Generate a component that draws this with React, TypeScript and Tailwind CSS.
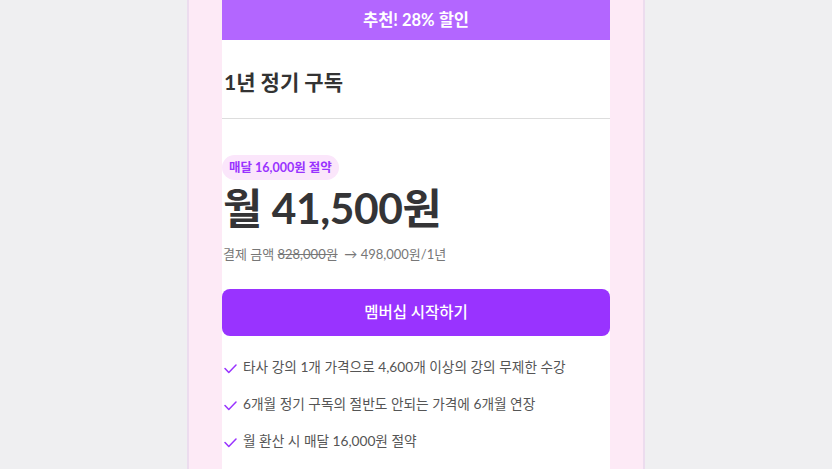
import React from "react";

const font = { fontFamily: "Lato, 'Noto Sans CJK KR', sans-serif" };

function Check() {
  return (
    <svg width="13" height="10" viewBox="0 0 13 10" className="shrink-0 mt-[8px]">
      <path d="M1 4.5 L4.8 8.5 L12 1" fill="none" stroke="#9933ff" strokeWidth="1.5" strokeLinecap="round" strokeLinejoin="round" />
    </svg>
  );
}

export default function App() {
  const items = [
    "타사 강의 1개 가격으로 4,600개 이상의 강의 무제한 수강",
    "6개월 정기 구독의 절반도 안되는 가격에 6개월 연장",
    "월 환산 시 매달 16,000원 절약",
  ];
  return (
    <div className="w-[832px] h-[469px] overflow-hidden bg-[#efeff1] flex justify-center" style={font}>
      <div className="w-[458px] h-full bg-[#fdeaf6] border-x-2 border-[#ecdcee] px-[33px]">
        <div className="bg-white h-full flex flex-col">
          <div className="h-[40px] bg-[#b366ff] text-white font-bold text-[16.5px] flex items-center justify-center">
            추천! 28% 할인
          </div>
          <div className="h-[79px] flex items-center border-b border-[#dddddd] pl-[2px] pt-[6px]">
            <h2 className="text-[21px] font-bold text-[#333333]">1년 정기 구독</h2>
          </div>
          <div className="pt-[35px]">
            <span className="inline-block rounded-full bg-[#fbe6fb] text-[#9933ff] text-[12.5px] font-bold px-[7px] py-[4px] leading-[17px]">
              매달 16,000원 절약
            </span>
          </div>
          <div className="text-[42.5px] font-bold text-[#343436] leading-[52px] mt-[2px] pl-[1px] tracking-[-0.4px]">
            월 41,500원
          </div>
          <div className="text-[13px] text-[#777777] mt-[10px] leading-[20px] pl-[1px]">
            결제 금액 <span className="line-through">828,000원</span>&nbsp; → 498,000원/1년
          </div>
          <button className="mt-[25px] h-[47px] w-full rounded-[8px] bg-[#9933ff] text-white text-[15.5px] font-medium flex items-center justify-center">
            멤버십 시작하기
          </button>
          <ul className="mt-[20px] flex flex-col gap-[15px]">
            {items.map((t) => (
              <li key={t} className="flex items-start gap-[6px] text-[13.7px] text-[#555555] leading-[22px] pl-[2px]">
                <Check />
                <span>{t}</span>
              </li>
            ))}
          </ul>
        </div>
      </div>
    </div>
  );
}
